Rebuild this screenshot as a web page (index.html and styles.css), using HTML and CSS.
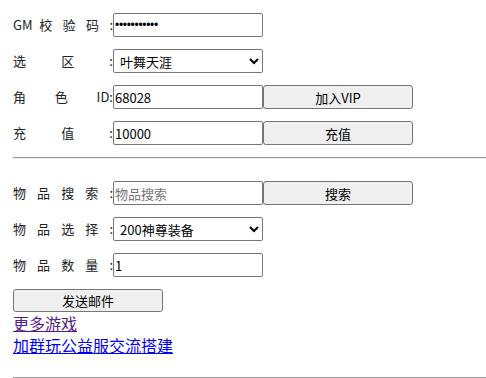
FILE: index.html
```html
<!DOCTYPE html>
<html>
<head>
<meta charset="utf-8">
<link rel="stylesheet" href="styles.css">
</head>
<body>
<div class="page">
  <div class="row"><span class="lbl">GM 校 验 码 :</span><input class="field secret" type="password" value="12345678901"></div>
  <div class="row"><span class="lbl">选 区 :</span><select class="field"><option>叶舞天涯</option></select></div>
  <div class="row"><span class="lbl">角 色 ID:</span><input class="field" type="text" value="68028"><button class="btn">加入VIP</button></div>
  <div class="row"><span class="lbl">充 值 :</span><input class="field" type="text" value="10000"><button class="btn">充值</button></div>
  <hr class="rule first">
  <div class="row"><span class="lbl">物 品 搜 索 :</span><input class="field" type="text" placeholder="物品搜索"><button class="btn">搜索</button></div>
  <div class="row"><span class="lbl">物 品 选 择 :</span><select class="field"><option>200神尊装备</option></select></div>
  <div class="row"><span class="lbl">物 品 数 量 :</span><input class="field" type="text" value="1"></div>
  <div class="send-row"><button class="btn">发送邮件</button></div>
  <a class="link visited" href="#">更多游戏</a>
  <a class="link fresh" href="#x">加群玩公益服交流搭建</a>
  <hr class="rule last">
</div>
</body>
</html>
```
FILE: styles.css
```css
html, body {
  margin: 0;
  padding: 0;
  background: #fff;
}
.page {
  padding: 13px 0 0 13px;
  font-family: "Noto Sans CJK SC", "Noto Sans", sans-serif;
  font-size: 13px;
  color: #222;
}
.row {
  display: flex;
  align-items: center;
  height: 24px;
  margin-bottom: 12px;
}
.lbl {
  display: inline-block;
  width: 100px;
  text-align: justify;
  text-align-last: justify;
  line-height: 24px;
  white-space: nowrap;
}
.field, .btn {
  box-sizing: border-box;
  width: 150px;
  height: 24px;
  margin: 0;
  font-family: "Noto Sans CJK SC", "Noto Sans", sans-serif;
  font-size: 13px;
  color: #000;
  border: 1px solid #767676;
  border-radius: 2px;
}
.field {
  background: #fff;
  padding: 0 1px;
}
.field.secret {
  font-family: "Liberation Sans", Arial, sans-serif;
  font-size: 12px;
  letter-spacing: -0.3px;
}
.field::placeholder {
  color: #757575;
}
select.field {
  padding: 0 0 0 2px;
}
.btn {
  background: #efefef;
  padding: 0;
  border-radius: 3px;
}
.rule {
  margin: 0;
  border: 0;
  border-top: 1px solid #9a9a9a;
  border-bottom: 1px solid #eee;
  height: 0;
}
.rule.first {
  margin-bottom: 22px;
}
.send-row {
  display: flex;
  height: 23px;
}
.send-row .btn {
  height: 23px;
}
.link {
  display: block;
  width: max-content;
  font-size: 16px;
  line-height: 22px;
}
.link.visited { color: #551a8b; }
.link.fresh { color: #0000ee; }
.rule.last {
  margin-top: 21px;
}
```
